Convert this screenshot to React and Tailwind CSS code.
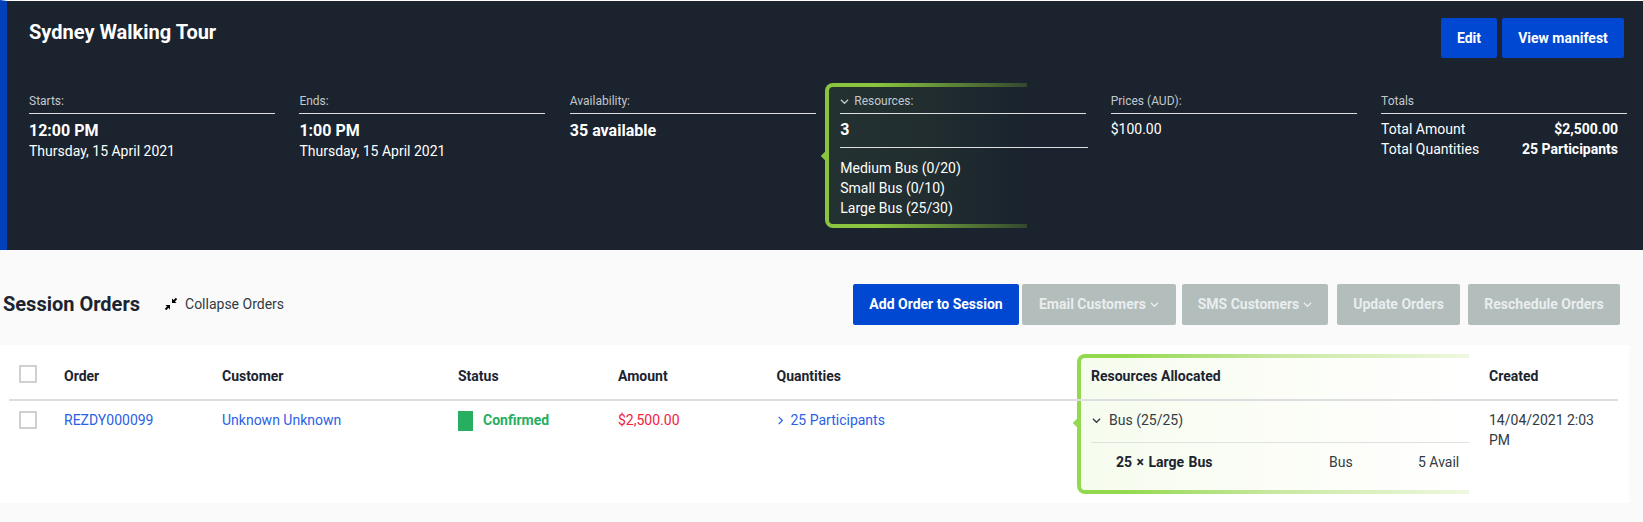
import React from "react";

const Chevron = ({ dir = "down", className = "" }) => (
  <svg viewBox="0 0 10 10" className={className} fill="none" stroke="currentColor" strokeWidth="1.4">
    {dir === "down" ? <path d="M1 3l4 4 4-4" /> : <path d="M3 1l4 4-4 4" />}
  </svg>
);

const CollapseIcon = () => (
  <svg viewBox="0 0 14 14" className="w-[14px] h-[14px] text-black" fill="currentColor" stroke="none">
    <path d="M8 1.5v4.5h4.5z" />
    <path d="M9 5L12.5 1.5" stroke="currentColor" strokeWidth="1.8" />
    <path d="M1.5 8h4.5v4.5z" />
    <path d="M5 9L1.5 12.5" stroke="currentColor" strokeWidth="1.8" />
  </svg>
);

const Highlight = ({ className, frame, fill, notch, edge }) => (
  <div className={`absolute pointer-events-none ${className}`}>
    <div className={`absolute inset-0 rounded-l-[8px] ${frame}`} />
    <div className={`absolute left-[4px] top-[4px] bottom-[4px] right-0 rounded-l-[4px] ${fill}`} />
    <div className={`absolute w-[6px] h-[6px] rotate-45 left-[-3px] ${notch} ${edge}`} />
  </div>
);

const Col = ({ label, children, icon }) => (
  <div className="min-w-0">
    <div className="flex items-center gap-[5px] text-[12px] leading-[16px] text-[#c3c8cc] pt-px pb-[4px] border-b border-[#dcdedf] h-[22px]">
      {icon}
      {label}
    </div>
    {children}
  </div>
);

const Btn = ({ children, active }) => (
  <button className={`h-[41px] pb-px rounded-[2px] font-bold text-[14px] flex items-center justify-center gap-[4px] ${active ? "bg-[#0047d1] text-white" : "bg-[#b2bdbc] text-[#e9eded]"}`}>
    {children}
  </button>
);

export default function App() {
  return (
    <div className="min-h-[522px] bg-[#fafafa] font-['Roboto',sans-serif] text-[14px] leading-[20px] text-[#1b2430]">
      <div className="h-[250px] border-t border-white bg-[#1a232e] border-l-[7px] border-l-[#0040b8] text-white pl-[22px] pr-[16px] pt-[17px]">
        <div className="flex justify-between items-start">
          <h1 className="text-[20px] leading-[28px] font-bold">Sydney Walking Tour</h1>
          <div className="flex gap-[5px] pr-[3px]">
            <button className="w-[56px] h-[40px] rounded-[2px] bg-[#0047d1] font-bold text-[14px]">Edit</button>
            <button className="w-[122px] h-[40px] rounded-[2px] bg-[#0047d1] font-bold text-[14px]">View manifest</button>
          </div>
        </div>
        <div className="grid grid-cols-6 gap-x-[24.5px] mt-[34px]">
          <Col label="Starts:">
            <div className="text-[16px] font-bold pt-[7px]">12:00 PM</div>
            <div>Thursday, 15 April 2021</div>
          </Col>
          <Col label="Ends:">
            <div className="text-[16px] font-bold pt-[7px]">1:00 PM</div>
            <div>Thursday, 15 April 2021</div>
          </Col>
          <Col label="Availability:">
            <div className="text-[16px] font-bold pt-[7px]">35 available</div>
          </Col>
          <div className="relative">
            <Highlight
              className="left-[-15px] top-[-9px] w-[202px] h-[145px]"
              frame="bg-[linear-gradient(to_right,#8bc53f_0%,#8bc53f_25%,#33472f_100%)]"
              fill="bg-[linear-gradient(to_right,#243131_0%,#212d2f_50%,#1a232e_100%)]"
              notch="top-[70px]"
              edge="bg-[#8bc53f]"
            />
            <div className="relative">
              <Col label="Resources:" icon={<Chevron className="w-[9px] h-[9px] text-[#c3c8cc]" />}>
                <div className="text-[16px] font-bold pt-[6px] pb-[6px] h-[33px]">3</div>
                <div className="border-t border-[#dcdedf] w-[248px] pt-[10px]">
                  <div>Medium Bus (0/20)</div>
                  <div>Small Bus (0/10)</div>
                  <div>Large Bus (25/30)</div>
                </div>
              </Col>
            </div>
          </div>
          <Col label="Prices (AUD):">
            <div className="pt-[5px]">$100.00</div>
          </Col>
          <Col label="Totals">
            <div className="pt-[5px] pr-[9px]">
              <div className="flex justify-between">
                <span>Total Amount</span>
                <span className="font-bold">$2,500.00</span>
              </div>
              <div className="flex justify-between">
                <span>Total Quantities</span>
                <span className="font-bold">25 Participants</span>
              </div>
            </div>
          </Col>
        </div>
      </div>

      <div className="h-[95px] flex items-start pt-[34px] pl-[3px] pr-[23px]">
        <h2 className="text-[20px] leading-[41px] font-bold">Session Orders</h2>
        <div className="flex items-center h-[39px] ml-[24px] gap-[7px] text-[#333b44] text-[14px]">
          <CollapseIcon />
          <span>Collapse Orders</span>
        </div>
        <div className="ml-auto flex">
          <div className="w-[166px] grid mr-[3px]"><Btn active>Add Order to Session</Btn></div>
          <div className="w-[154px] grid mr-[6px]"><Btn>Email Customers <Chevron className="w-[9px] h-[9px]" /></Btn></div>
          <div className="w-[146px] grid mr-[9px]"><Btn>SMS Customers <Chevron className="w-[9px] h-[9px]" /></Btn></div>
          <div className="w-[123px] grid mr-[8px]"><Btn>Update Orders</Btn></div>
          <div className="w-[152px] grid"><Btn>Reschedule Orders</Btn></div>
        </div>
      </div>

      <div className="relative bg-white w-[1629px] h-[158px] pl-[9px]">
        <Highlight
          className="left-[1077px] top-[9px] w-[392px] h-[140px]"
          frame="bg-[linear-gradient(to_right,#93d94f_0%,#93d94f_12%,#c8e8a0_50%,#eef8e0_100%)]"
          fill="bg-[linear-gradient(to_right,#f6fcee_0%,#fbfdf6_50%,#ffffff_100%)]"
          notch="top-[66px]"
          edge="bg-[#93d94f]"
        />
        <div className="relative grid grid-cols-[55px_158px_236px_160px_158.5px_300.5px_412px_129px] w-[1609px] h-[56px] pt-[21px] border-b-2 border-[#dcdfe0] font-bold">
          <div className="pl-[10px] -mt-px"><div className="w-[18px] h-[18px] border-2 border-[#cdd1d4]" /></div>
          <div>Order</div>
          <div>Customer</div>
          <div>Status</div>
          <div>Amount</div>
          <div>Quantities</div>
          <div className="pl-[14px]">Resources Allocated</div>
          <div>Created</div>
        </div>
        <div className="relative grid grid-cols-[55px_158px_236px_160px_158.5px_300.5px_412px_129px] w-[1609px] pt-[9px]">
          <div className="pl-[10px] pt-px"><div className="w-[18px] h-[18px] border-2 border-[#cdd1d4]" /></div>
          <div className="text-[#2a5fe6]">REZDY000099</div>
          <div className="text-[#2a5fe6]">Unknown Unknown</div>
          <div className="flex items-start">
            <div className="w-[15px] h-[20px] bg-[#27ae60] mt-px" />
            <span className="ml-[10px] font-bold text-[#27ae60]">Confirmed</span>
          </div>
          <div className="text-[#f0223e]">$2,500.00</div>
          <div className="flex items-center h-[20px] text-[#2a5fe6] -ml-px">
            <Chevron dir="right" className="w-[9px] h-[9px] mr-[6px]" />
            25 Participants
          </div>
          <div className="pl-[14px]">
            <div className="flex items-center h-[20px] text-[#333b44] pl-px">
              <Chevron className="w-[9px] h-[9px] mr-[8px]" />
              Bus (25/25)
            </div>
            <div className="mt-[12px] border-t border-[#dfe3df] w-[378px] flex pt-[9px] pl-[25px] text-[#333b44]">
              <span className="w-[213px] font-bold text-[#1b2430] [word-spacing:1px]">25 × Large Bus</span>
              <span className="w-[89px]">Bus</span>
              <span>5 Avail</span>
            </div>
          </div>
          <div className="text-[#333b44] pr-[12px]">14/04/2021 2:03 PM</div>
        </div>
      </div>
    </div>
  );
}
